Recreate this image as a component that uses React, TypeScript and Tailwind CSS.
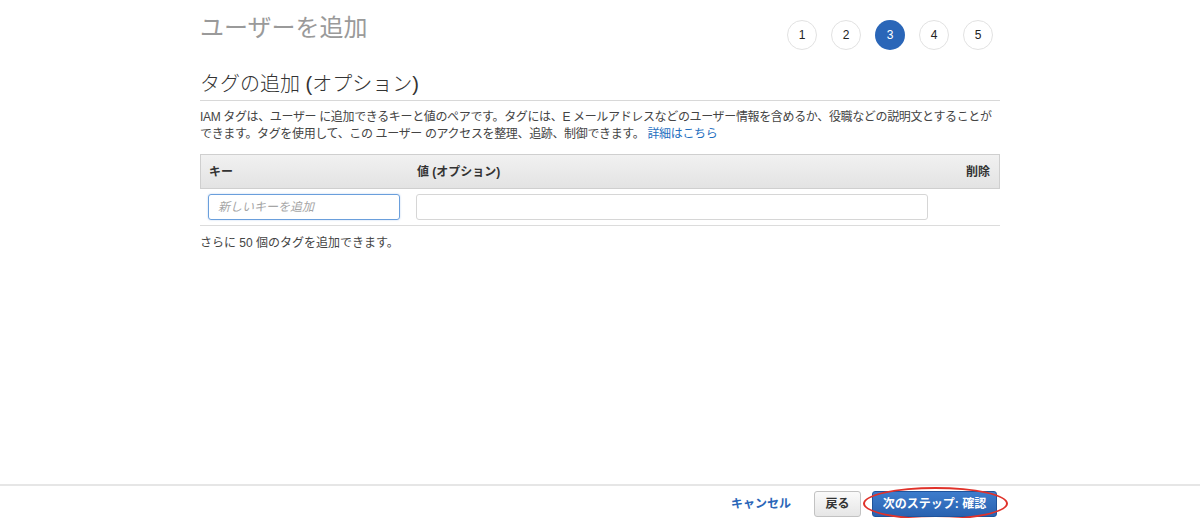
import React from 'react';

const font = { fontFamily: '"Liberation Sans", "Noto Sans CJK JP", sans-serif' };

const steps = [1, 2, 3, 4, 5];

export default function App() {
  return (
    <div className="flex h-[518px] w-[1200px] flex-col bg-white text-[#444]" style={font}>
      <div className="mx-auto w-[800px] flex-1">
        {/* Header */}
        <div className="flex items-start justify-between pt-[12px]">
          <h1 className="text-[24px] leading-[32px] text-[#9a9a9a]">ユーザーを追加</h1>
          <div className="mr-[7px] mt-[8px] flex gap-[14px]">
            {steps.map((s) => (
              <div
                key={s}
                className={
                  s === 3
                    ? 'flex h-[30px] w-[30px] items-center justify-center rounded-full bg-[#2a66b8] text-[12px] text-white'
                    : 'flex h-[30px] w-[30px] items-center justify-center rounded-full border border-[#e2e2e2] bg-white text-[12px] text-[#222]'
                }
              >
                {s}
              </div>
            ))}
          </div>
        </div>

        {/* Section */}
        <h2 className="mt-[21px] border-b border-[#d8d8d8] pb-[3px] text-[20px] font-light leading-[26px] text-[#333]">
          タグの追加 (オプション)
        </h2>
        <p className="mt-[8px] whitespace-nowrap text-[12px] leading-[17px] tracking-[-0.35px] text-[#444]">
          IAM タグは、ユーザー に追加できるキーと値のペアです。タグには、E メールアドレスなどのユーザー情報を含めるか、役職などの説明文とすることが
          <br />
          できます。タグを使用して、この ユーザー のアクセスを整理、追跡、制御できます。{' '}
          <a className="text-[#1f6fbf]">詳細はこちら</a>
        </p>

        {/* Table */}
        <div className="mt-[11px]">
          <div className="flex h-[35px] items-center border border-[#cfcfcf] bg-gradient-to-b from-[#f1f1f1] to-[#e3e3e3] text-[12px] font-bold text-[#333]">
            <div className="w-[216px] pl-[8px]">キー</div>
            <div className="flex-1">値 (オプション)</div>
            <div className="pr-[9px]">削除</div>
          </div>
          <div className="flex items-center border-b border-[#dcdcdc] py-[5px]">
            <div className="w-[216px] pl-[8px]">
              <input
                placeholder="新しいキーを追加"
                className="h-[26px] w-[192px] rounded-[3px] border border-[#6a9fdc] px-[9px] text-[12px] italic text-[#333] shadow-[0_0_2px_rgba(80,140,220,0.4)] outline-none placeholder:text-[#a5a5a5]"
                style={font}
              />
            </div>
            <input className="h-[26px] w-[512px] rounded-[3px] border border-[#d6d6d6] outline-none" />
          </div>
          <p className="mt-[9px] text-[12px] leading-[17px] text-[#444]">さらに 50 個のタグを追加できます。</p>
        </div>
      </div>

      {/* Footer */}
      <div className="h-[34px] border-t-2 border-[#e6e6e6]">
        <div className="mx-auto flex w-[800px] items-center justify-end pr-[3px] pt-[5px]">
          <a className="mr-[23px] text-[12px] font-bold text-[#2a66b8]">キャンセル</a>
          <button className="h-[26px] w-[47px] rounded-[3px] border border-[#c2c2c2] bg-gradient-to-b from-[#fafafa] to-[#e6e6e6] text-[12px] font-bold text-[#333]">
            戻る
          </button>
          <div className="relative ml-[11px]">
            <button className="h-[26px] w-[125px] rounded-[3px] border border-[#1f539a] bg-gradient-to-b from-[#3d7ccc] to-[#2a62b0] text-[12px] font-bold text-white">
              次のステップ: 確認
            </button>
            <div className="pointer-events-none absolute -left-[9px] -right-[11px] -top-[4px] -bottom-[3px] rounded-[50%] border-2 border-[#e0322a]" />
          </div>
        </div>
      </div>
    </div>
  );
}
